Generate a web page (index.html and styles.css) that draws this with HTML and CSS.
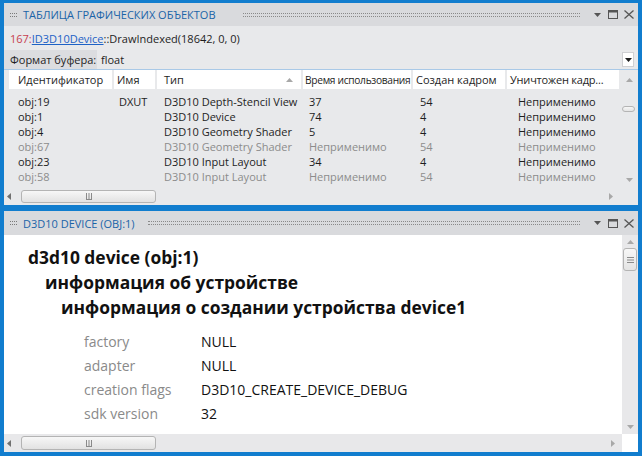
FILE: index.html
```html
<!DOCTYPE html>
<html lang="ru">
<head>
<meta charset="utf-8">
<title>Графические объекты</title>
<link rel="stylesheet" href="styles.css">
</head>
<body>
<div class="frame">
  <section class="panel panel-top">
    <header class="titlebar">
      <span class="grip"></span>
      <span class="title">ТАБЛИЦА ГРАФИЧЕСКИХ ОБЪЕКТОВ</span>
      <span class="dots dots-top"></span>
      <span class="tools">
        <svg class="ico-dd" width="7" height="4" viewBox="0 0 7 4"><polygon points="0,0 7,0 3.5,4" fill="#555"/></svg>
        <svg class="ico-max" width="10" height="9" viewBox="0 0 10 9"><path d="M0 0H10V9H0Z M1 2.5V8H9V2.5Z" fill="#555" fill-rule="evenodd"/></svg>
        <svg class="ico-close" width="10" height="9" viewBox="0 0 10 9"><path d="M0.5 0.5L9.5 8.5M9.5 0.5L0.5 8.5" stroke="#555" stroke-width="1.3"/></svg>
      </span>
    </header>
    <div class="callrow"><span class="num">167:</span><span class="link">ID3D10Device</span>::DrawIndexed(18642, 0, 0)</div>
    <div class="formatrow">
      <span class="flabel">Формат буфера:</span>
      <span class="fvalue">float</span>
      <span class="ddbtn"><svg width="7" height="4" viewBox="0 0 7 4"><polygon points="0,0 7,0 3.5,4" fill="#1e1e1e"/></svg></span>
    </div>
    <div class="gridwrap">
      <div class="grid">
        <div class="cols ghead">
          <div class="hc c1">Идентификатор</div>
          <div class="hc c2">Имя</div>
          <div class="hc c3"><span>Тип</span><svg width="7" height="4" viewBox="0 0 7 4"><polygon points="0,4 7,4 3.5,0" fill="#a8a8a8"/></svg></div>
          <div class="hc c4">Время использования</div>
          <div class="hc c5">Создан кадром</div>
          <div class="hc c6">Уничтожен кадр...</div>
        </div>
        <div class="gbody">
          <div class="cols row"><span class="d1">obj:19</span><span class="d2">DXUT</span><span class="d3">D3D10 Depth-Stencil View</span><span class="d4">37</span><span class="d5">54</span><span class="d6">Неприменимо</span></div>
          <div class="cols row"><span class="d1">obj:1</span><span class="d2"></span><span class="d3">D3D10 Device</span><span class="d4">74</span><span class="d5">4</span><span class="d6">Неприменимо</span></div>
          <div class="cols row"><span class="d1">obj:4</span><span class="d2"></span><span class="d3">D3D10 Geometry Shader</span><span class="d4">5</span><span class="d5">4</span><span class="d6">Неприменимо</span></div>
          <div class="cols row dim"><span class="d1">obj:67</span><span class="d2"></span><span class="d3">D3D10 Geometry Shader</span><span class="d4">Неприменимо</span><span class="d5">54</span><span class="d6">Неприменимо</span></div>
          <div class="cols row"><span class="d1">obj:23</span><span class="d2"></span><span class="d3">D3D10 Input Layout</span><span class="d4">34</span><span class="d5">4</span><span class="d6">Неприменимо</span></div>
          <div class="cols row dim"><span class="d1">obj:58</span><span class="d2"></span><span class="d3">D3D10 Input Layout</span><span class="d4">Неприменимо</span><span class="d5">54</span><span class="d6">Неприменимо</span></div>
        </div>
      </div>
      <div class="vscroll vscroll-top">
        <svg class="arr-up" width="7" height="4" viewBox="0 0 7 4"><polygon points="0,4 7,4 3.5,0" fill="#a8a8a8"/></svg>
        <span class="vthumb vthumb-small"></span>
        <svg class="arr-down" width="7" height="4" viewBox="0 0 7 4"><polygon points="0,0 7,0 3.5,4" fill="#a8a8a8"/></svg>
      </div>
    </div>
    <div class="hscrollrow">
      <div class="hscroll">
        <svg class="arr-left" width="4" height="7" viewBox="0 0 4 7"><polygon points="4,0 4,7 0,3.5" fill="#707070"/></svg>
        <span class="hthumb"><svg width="8" height="7" viewBox="0 0 8 7"><path d="M1.5 0V6.5M4 0V6.5M6.5 0V6.5M1 6.5H7" stroke="#8a8a8a" stroke-width="1"/></svg></span>
        <svg class="arr-right" width="4" height="7" viewBox="0 0 4 7"><polygon points="0,0 0,7 4,3.5" fill="#a8a8a8"/></svg>
      </div>
      <div class="corner"></div>
    </div>
  </section>

  <section class="panel panel-bottom">
    <header class="titlebar titlebar-b">
      <span class="grip"></span>
      <span class="title">D3D10 DEVICE (OBJ:1)</span>
      <span class="dots dots-bottom"></span>
      <span class="tools">
        <svg class="ico-dd" width="7" height="4" viewBox="0 0 7 4"><polygon points="0,0 7,0 3.5,4" fill="#555"/></svg>
        <svg class="ico-max" width="10" height="9" viewBox="0 0 10 9"><path d="M0 0H10V9H0Z M1 2.5V8H9V2.5Z" fill="#555" fill-rule="evenodd"/></svg>
        <svg class="ico-close" width="10" height="9" viewBox="0 0 10 9"><path d="M0.5 0.5L9.5 8.5M9.5 0.5L0.5 8.5" stroke="#555" stroke-width="1.3"/></svg>
      </span>
    </header>
    <div class="content">
      <div class="doc">
        <h1 class="h h1">d3d10 device (obj:1)</h1>
        <h2 class="h h2">информация об устройстве</h2>
        <h3 class="h h3">информация о создании устройства device1</h3>
        <dl class="props">
          <dt>factory</dt><dd>NULL</dd>
          <dt>adapter</dt><dd>NULL</dd>
          <dt>creation flags</dt><dd>D3D10_CREATE_DEVICE_DEBUG</dd>
          <dt>sdk version</dt><dd>32</dd>
        </dl>
      </div>
      <div class="vscroll vscroll-b">
        <svg class="arr-up" width="7" height="4" viewBox="0 0 7 4"><polygon points="0,4 7,4 3.5,0" fill="#a8a8a8"/></svg>
        <span class="vthumb vthumb-big"><svg width="7" height="6" viewBox="0 0 7 6"><path d="M0 0.5H7M0 3H7M0 5.5H7" stroke="#8a8a8a" stroke-width="1"/></svg></span>
        <svg class="arr-down" width="7" height="4" viewBox="0 0 7 4"><polygon points="0,0 7,0 3.5,4" fill="#a8a8a8"/></svg>
      </div>
    </div>
    <div class="hscrollrow hscrollrow-b">
      <div class="hscroll">
        <svg class="arr-left" width="4" height="7" viewBox="0 0 4 7"><polygon points="4,0 4,7 0,3.5" fill="#707070"/></svg>
        <span class="hthumb"><svg width="8" height="7" viewBox="0 0 8 7"><path d="M1.5 0V6.5M4 0V6.5M6.5 0V6.5M1 6.5H7" stroke="#8a8a8a" stroke-width="1"/></svg></span>
        <svg class="arr-right" width="4" height="7" viewBox="0 0 4 7"><polygon points="0,0 0,7 4,3.5" fill="#a8a8a8"/></svg>
      </div>
      <div class="corner corner-b"></div>
    </div>
  </section>
</div>
</body>
</html>
```

FILE: styles.css
```css
* { box-sizing: border-box; }
html, body { margin: 0; padding: 0; }
body { background: #117dce; }

.frame {
  width: 642px;
  height: 456px;
  padding: 3px 4px 4px 4px;
  display: flex;
  flex-direction: column;
  gap: 6px;
  font-family: "Open Sans", "Noto Sans", sans-serif;
  color: #1e1e1e;
}

.panel { display: flex; flex-direction: column; overflow: hidden; }
.panel-top { flex: 0 0 202px; background: #e8e9eb; }
.panel-bottom { flex: 0 0 241px; background: #ffffff; }

/* title bars */
.titlebar {
  flex: 0 0 23px;
  display: flex;
  align-items: center;
  background: #d9dadd;
  padding: 0 4px 0 6px;
}
.titlebar-b { flex-basis: 24px; }
.grip {
  width: 7px;
  height: 4px;
  border-top: 1px dotted #7a7a7a;
  border-bottom: 1px dotted #7a7a7a;
  margin-right: 6px;
}
.title { font-size: 11px; color: #1a64a8; white-space: nowrap; }
.dots {
  flex: 1;
  height: 4px;
  border-top: 1px dotted #8a8a8a;
  border-bottom: 1px dotted #8a8a8a;
  margin-right: 14px;
}
.dots-top { margin-left: 27px; }
.dots-bottom { margin-left: 13px; }
.tools { display: flex; align-items: center; gap: 7px; }
.ico-max { margin-right: -1px; }

/* call row */
.callrow {
  flex: 0 0 24px;
  display: flex;
  align-items: center;
  padding-left: 6px;
  font-size: 11px;
  white-space: pre;
}
.num { color: #c7414f; }
.link { color: #1e62c6; text-decoration: underline; }

/* format row */
.formatrow {
  flex: 0 0 20px;
  display: flex;
  align-items: center;
  border-bottom: 1px solid #a9c9e7;
  font-size: 11px;
}
.flabel {
  align-self: stretch;
  display: flex;
  align-items: center;
  width: 93px;
  padding-left: 6px;
  background: #dcdde0;
}
.fvalue { margin-left: 4px; }
.ddbtn {
  margin-left: auto;
  margin-right: 4px;
  width: 12px;
  height: 15px;
  background: #ffffff;
  border: 1px solid #cfd0d3;
  display: flex;
  align-items: center;
  justify-content: center;
}

/* grid */
.gridwrap { flex: 0 0 118px; display: flex; }
.grid { flex: 0 0 615px; padding-left: 5px; }
.cols {
  display: grid;
  grid-template-columns: 103px 41px 144px 108px 92px 112px;
  column-gap: 2px;
}
.ghead { height: 19px; }
.hc {
  background: #ffffff;
  font-size: 11px;
  display: flex;
  align-items: center;
  white-space: nowrap;
  overflow: hidden;
  min-width: 0;
}
.c1 { padding-left: 9px; }
.c2 { padding-left: 3px; }
.c3 { padding-left: 7px; padding-right: 8px; justify-content: space-between; }
.c4 { padding-left: 2px; font-size: 10.2px; letter-spacing: -0.3px; }
.c5 { padding-left: 3px; }
.c6 { padding-left: 3px; letter-spacing: -0.2px; }

.gbody { margin-top: 5px; }
.row { height: 15px; font-size: 11px; line-height: 15px; white-space: nowrap; }
.row.dim { color: #8c8c8c; }
.d1 { padding-left: 9px; }
.d2 { padding-left: 5px; }
.d3 { padding-left: 7px; }
.d4 { padding-left: 6px; }
.d5 { padding-left: 7px; }
.d6 { padding-left: 11px; }

/* scrollbars */
.vscroll {
  display: flex;
  flex-direction: column;
  align-items: center;
}
.vscroll-top { flex: 0 0 19px; padding: 8px 0 6px; }
.vscroll-top .arr-up { margin-left: 1px; }
.vscroll-top .arr-down { margin-top: auto; margin-left: 1px; }
.vthumb {
  display: flex;
  align-items: center;
  justify-content: center;
  background: linear-gradient(#f7f7f7, #e4e4e4);
  border: 1px solid #b4b4b4;
  border-radius: 3px;
}
.vthumb-small { width: 13px; height: 6px; margin-top: 24px; }

.vscroll-b { flex: 0 0 16px; background: #e8e8ea; padding: 5px 0 5px; }
.vthumb-big { width: 14px; height: 23px; margin-top: 4px; }
.vscroll-b .arr-down { margin-top: auto; }

.hscrollrow { flex: 0 0 17px; display: flex; }
.hscrollrow-b { flex-basis: 18px; }
.hscroll {
  flex: 1;
  display: flex;
  align-items: center;
  padding-left: 3px;
  padding-right: 6px;
}
.hscrollrow-b .hscroll { background: #e8e8ea; padding-right: 7px; }
.hthumb {
  margin-left: 10px;
  width: 135px;
  height: 13px;
  display: flex;
  align-items: center;
  justify-content: center;
  background: linear-gradient(#f7f7f7, #e2e2e2);
  border: 1px solid #b4b4b4;
  border-radius: 3px;
}
.hscrollrow-b .hthumb { height: 14px; }
.arr-right { margin-left: auto; }
.corner { flex: 0 0 19px; }
.corner-b { flex-basis: 16px; background: #ffffff; }

/* document */
.content { flex: 0 0 199px; display: flex; }
.doc { flex: 1; padding-top: 10px; }
.h {
  margin: 0;
  font-weight: 700;
  font-size: 17.4px;
  line-height: 25px;
  color: #111111;
  white-space: nowrap;
}
.h1 { margin-left: 24px; }
.h2 { margin-left: 41px; }
.h3 { margin-left: 57px; }
.props {
  margin: 10px 0 0 80px;
  display: grid;
  grid-template-columns: 117px auto;
  font-size: 14px;
  line-height: 24px;
}
.props dt { color: #8a8a8a; }
.props dd { margin: 0; color: #111111; }
```
